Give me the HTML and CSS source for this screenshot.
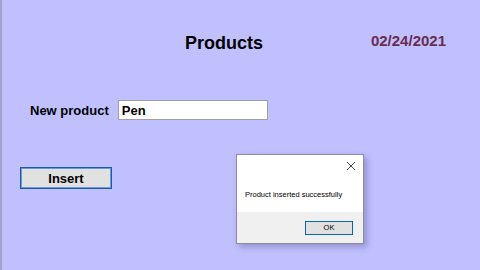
FILE: index.html
```html
<!DOCTYPE html>
<html lang="en">
<head>
    <meta charset="UTF-8">
    <title>Products</title>
    <link rel="stylesheet" href="styles.css">
</head>
<body>
    <div class="form-window">
        <div class="header">
            <h2 class="title">Products</h2>
            <span class="date">02/24/2021</span>
        </div>
        <div class="field-row">
            <label for="product">New product</label>
            <input type="text" id="product" value="Pen">
        </div>
        <button type="button" class="insert-btn">Insert</button>

        <div class="msgbox">
            <div class="msgbox-body">
                <svg class="close" width="10" height="10" viewBox="0 0 10 10">
                    <path d="M1 1L9 9M9 1L1 9" stroke="#333" stroke-width="0.9" fill="none"/>
                </svg>
                <p class="message">Product inserted successfully</p>
            </div>
            <div class="msgbox-footer">
                <button type="button" class="ok-btn">OK</button>
            </div>
        </div>
    </div>
</body>
</html>
```

FILE: styles.css
```css
body {
    margin: 0;
    background: #c0c0ff;
    font-family: "Liberation Sans", Arial, sans-serif;
}
.form-window {
    position: relative;
    height: 270px;
    border-left: 2px solid #a2a2c6;
    box-sizing: border-box;
}
.header {
    display: flex;
    align-items: baseline;
    padding: 33px 34px 0 183px;
}
.title {
    margin: 0;
    font-size: 18px;
    font-weight: bold;
    color: #000;
}
.date {
    margin-left: auto;
    font-size: 15px;
    font-weight: bold;
    color: #6a2b50;
    position: relative;
    top: -3px;
}
.field-row {
    display: flex;
    align-items: center;
    gap: 9px;
    margin: 46px 0 0 28px;
}
.field-row label {
    font-size: 13px;
    font-weight: bold;
}
.field-row input {
    width: 150px;
    height: 20px;
    box-sizing: border-box;
    border: 1px solid #a0a0a0;
    padding: 0 3px;
    font-family: "Liberation Sans", Arial, sans-serif;
    font-size: 13px;
    font-weight: bold;
    outline: none;
}
.insert-btn {
    display: block;
    margin: 47px 0 0 18px;
    width: 92px;
    height: 22px;
    background: #e1e1e1;
    border: 1px solid #1d5aa8;
    box-shadow: inset 0 0 0 1px #6b9ad6;
    font-family: "Liberation Sans", Arial, sans-serif;
    font-size: 13px;
    font-weight: bold;
    padding: 0;
}

/* message box over the form */
.msgbox {
    position: absolute;
    left: 234px;
    top: 154px;
    width: 126px;
    height: 88px;
    border: 1px solid #8c8c9c;
    background: #fff;
    box-shadow: 3px 3px 6px rgba(60, 60, 110, 0.35);
    display: flex;
    flex-direction: column;
    font-family: "Liberation Sans", Arial, sans-serif;
}
.msgbox-body {
    flex: 1;
    position: relative;
}
.close {
    position: absolute;
    right: 7px;
    top: 6px;
}
.message {
    margin: 35px 0 0 8px;
    font-size: 7.5px;
    color: #000;
}
.msgbox-footer {
    height: 31px;
    background: #f0f0f0;
    display: flex;
    align-items: center;
    justify-content: flex-end;
    padding-right: 10px;
}
.ok-btn {
    width: 48px;
    height: 14px;
    padding: 0;
    background: #e1e1e1;
    border: 1px solid #0a64b4;
    font-family: "Liberation Sans", Arial, sans-serif;
    font-size: 7.5px;
}
```
